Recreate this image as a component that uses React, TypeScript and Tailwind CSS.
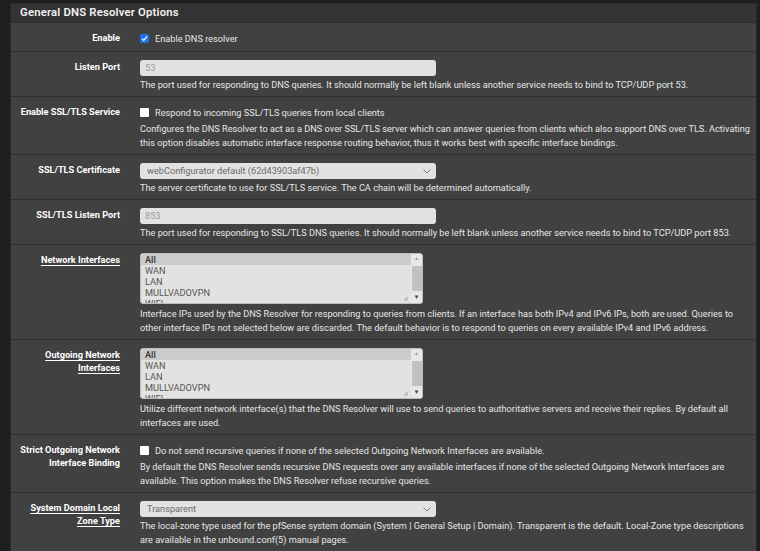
import React from 'react';

const font = { fontFamily: 'Roboto, "Liberation Sans", sans-serif' };

const Chevron: React.FC = () => (
  <svg width="8" height="5" viewBox="0 0 8 5" className="text-gray-500">
    <path d="M0.5 0.5 L4 4 L7.5 0.5" fill="none" stroke="currentColor" strokeWidth="0.9" />
  </svg>
);

const Row: React.FC<{ label: React.ReactNode; underline?: boolean; extraPb?: boolean; children: React.ReactNode }> = ({
  label,
  underline,
  extraPb,
  children,
}) => (
  <div className="flex border-t border-[#2f2f2f] bg-[#414141]">
    <div className="w-[109px] shrink-0 pt-[8px] text-right text-[9.2px] font-bold leading-[13px] text-white">
      {underline ? <span className="underline underline-offset-2">{label}</span> : label}
    </div>
    <div className={extraPb ? 'flex-1 pl-[20px] pr-[4px] pt-[8px] pb-[5px]' : 'flex-1 pl-[20px] pr-[4px] pt-[8px] pb-[4px]'}>
      {children}
    </div>
  </div>
);

const Help: React.FC<{ children: React.ReactNode; gap?: boolean }> = ({ children, gap }) => (
  <p className={gap ? 'mt-[3px] text-[9.2px] leading-[14px] text-[#e6e6e6]' : 'mt-[2px] text-[9.2px] leading-[14px] text-[#e6e6e6]'}>
    {children}
  </p>
);

const Check: React.FC<{ checked?: boolean; label: string }> = ({ checked, label }) => (
  <label className="flex h-[15px] items-center gap-[6px] text-[9.2px] text-[#e6e6e6]">
    {checked ? (
      <span className="flex h-[9px] w-[9px] items-center justify-center rounded-[2px] bg-[#1a73e8]">
        <svg width="7" height="7" viewBox="0 0 7 7">
          <path d="M1 3.7 L2.8 5.4 L6 1.4" fill="none" stroke="white" strokeWidth="1.3" />
        </svg>
      </span>
    ) : (
      <span className="h-[9px] w-[9px] rounded-[1px] bg-white" />
    )}
    {label}
  </label>
);

const TextInput: React.FC<{ value: string }> = ({ value }) => (
  <div className="flex h-[16px] w-[296px] items-center rounded-[3px] bg-[#e2e2e2] px-[5px] text-[9.2px] text-[#9a9a9a]">{value}</div>
);

const Select: React.FC<{ value: string }> = ({ value }) => (
  <div className="flex h-[16px] w-[296px] items-center justify-between rounded-[3px] bg-[#e2e2e2] pl-[7px] pr-[5px] text-[9.2px] text-[#6a6a6a]">
    <span>{value}</span>
    <Chevron />
  </div>
);

const ListBox: React.FC = () => (
  <div className="flex h-[51px] w-[283px] overflow-hidden rounded-[3px] border border-[#bdbdbd] bg-[#e2e2e2]">
    <div className="relative flex-1 text-[9.2px] leading-[11px] text-[#555]">
      <div className="bg-[#cbcbcb] pl-[4px] font-medium text-[#333]">All</div>
      <div className="pl-[4px]">WAN</div>
      <div className="pl-[4px]">LAN</div>
      <div className="pl-[4px]">MULLVADOVPN</div>
      <div className="pl-[4px]">WIFI</div>
      <span className="absolute bottom-[2px] right-[3px] text-[6px] leading-none text-[#bbb]">◢</span>
    </div>
    <div className="flex w-[11px] flex-col items-center bg-[#e8e8e8]">
      <span className="h-[12px] pt-[2px] text-[5px] leading-none text-[#999]">▲</span>
      <div className="w-[10px] flex-1 bg-[#c1c1c1]" />
      <span className="h-[12px] pt-[3px] text-[6px] leading-none text-[#444]">▼</span>
    </div>
  </div>
);

export default function App() {
  return (
    <div className="h-[551px] w-[760px] overflow-hidden bg-[#1e1e1e] pl-[10px] pr-[3px] pt-[3px]" style={font}>
      <div className="border border-[#2a2a2a] bg-[#414141]">
        <div className="flex h-[18px] items-center bg-[#333333] pl-[9px] text-[11.3px] font-semibold tracking-[0.2px] text-[#f2f2f2]">
          General DNS Resolver Options
        </div>
        <Row label="Enable" extraPb>
          <Check checked label="Enable DNS resolver" />
        </Row>
        <Row label="Listen Port">
          <TextInput value="53" />
          <Help>The port used for responding to DNS queries. It should normally be left blank unless another service needs to bind to TCP/UDP port 53.</Help>
        </Row>
        <Row label="Enable SSL/TLS Service">
          <Check label="Respond to incoming SSL/TLS queries from local clients" />
          <Help>
            Configures the DNS Resolver to act as a DNS over SSL/TLS server which can answer queries from clients which also support DNS over TLS. Activating this option disables automatic interface response routing behavior, thus it works best with specific interface bindings.
          </Help>
        </Row>
        <Row label="SSL/TLS Certificate">
          <Select value="webConfigurator default (62d43903af47b)" />
          <Help>The server certificate to use for SSL/TLS service. The CA chain will be determined automatically.</Help>
        </Row>
        <Row label="SSL/TLS Listen Port">
          <TextInput value="853" />
          <Help>The port used for responding to SSL/TLS DNS queries. It should normally be left blank unless another service needs to bind to TCP/UDP port 853.</Help>
        </Row>
        <Row label="Network Interfaces" underline>
          <ListBox />
          <Help gap>
            Interface IPs used by the DNS Resolver for responding to queries from clients. If an interface has both IPv4 and IPv6 IPs, both are used. Queries to other interface IPs not selected below are discarded. The default behavior is to respond to queries on every available IPv4 and IPv6 address.
          </Help>
        </Row>
        <Row
          label={
            <>
              Outgoing Network
              <br />
              Interfaces
            </>
          }
          underline
        >
          <ListBox />
          <Help gap>
            Utilize different network interface(s) that the DNS Resolver will use to send queries to authoritative servers and receive their replies. By default all interfaces are used.
          </Help>
        </Row>
        <Row
          label={
            <>
              Strict Outgoing Network
              <br />
              Interface Binding
            </>
          }
        >
          <Check label="Do not send recursive queries if none of the selected Outgoing Network Interfaces are available." />
          <Help>
            By default the DNS Resolver sends recursive DNS requests over any available interfaces if none of the selected Outgoing Network Interfaces are available. This option makes the DNS Resolver refuse recursive queries.
          </Help>
        </Row>
        <Row
          label={
            <>
              System Domain Local
              <br />
              Zone Type
            </>
          }
          underline
        >
          <Select value="Transparent" />
          <Help>
            The local-zone type used for the pfSense system domain (System | General Setup | Domain). Transparent is the default. Local-Zone type descriptions are available in the unbound.conf(5) manual pages.
          </Help>
        </Row>
      </div>
    </div>
  );
}
